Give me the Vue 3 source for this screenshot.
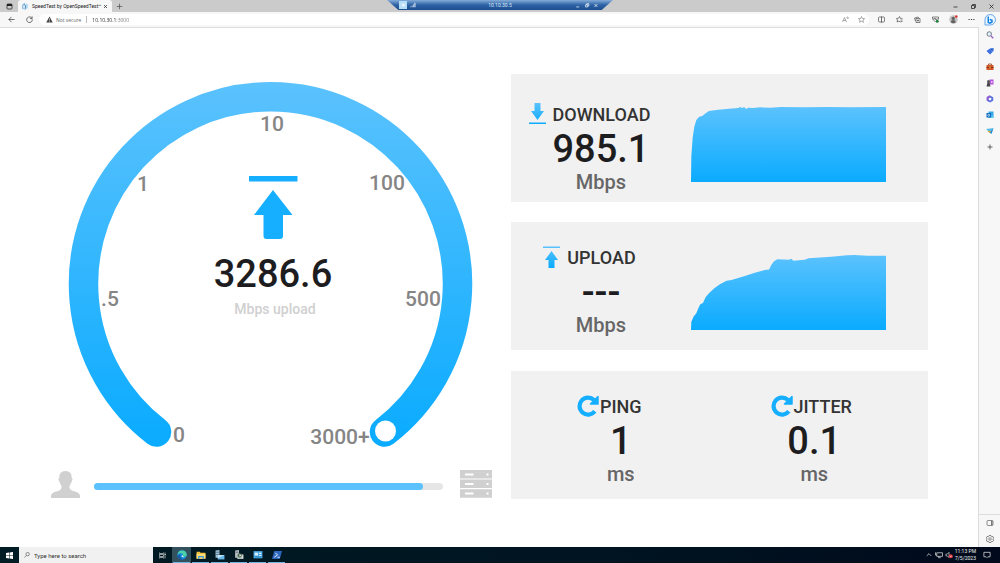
<script setup>
import { ref } from 'vue'

const address = ref('10.10.30.1:3000')
const search = ref('')
const progress = ref(94.3)

const ticks = [
  { label: '0', x: 128, y: 368 },
  { label: '.5', x: 59, y: 232 },
  { label: '1', x: 92, y: 117 },
  { label: '10', x: 221, y: 57 },
  { label: '100', x: 336, y: 116 },
  { label: '500', x: 372, y: 232 },
  { label: '3000+', x: 289, y: 370 }
]

const downloadArea =
  'M0 224L1 146L5 92L10 59L16 39L25 29L34 27L42 20L54 12L82 8L114 5L142 3L148 0L154 3L160 0L166 6L172 2L188 3L208 1L240 2L270 0L340 1L410 0L480 1L587 0V224Z'
const uploadArea =
  'M0 224L1 199L8 184L16 174L22 159L28 147L36 143L44 126L54 114L70 99L87 87L107 77L122 75L162 63L192 53L222 45L235 43L242 29L250 19L260 13L295 14L302 11L308 17L342 14L354 10L422 5L470 1L492 0L532 2L587 2V224Z'

const metrics = [
  { name: 'PING', value: '1' },
  { name: 'JITTER', value: '0.1' }
]
</script>

<template>
  <div class="desktop">
    <header class="tabstrip">
      <button class="tool" aria-label="Tab actions">
        <svg class="glyph" viewBox="0 0 14 14"><rect x="2" y="2" width="10" height="10" rx="1.5" fill="none" stroke="#222" stroke-width="1.5" /><path d="M2 2h10v4H2z" fill="#222" /></svg>
      </button>
      <div class="tab">
        <svg class="glyph" viewBox="0 0 14 14"><path d="M3 12A6 6 0 0 1 6 1.500" fill="none" stroke="#8abbe4" stroke-width="3" /><path d="M7 1c4 0 6 3 5 7l-2 5-3-3z" fill="#b9d7ee" /><path d="M5 3l2 3-1 7" fill="none" stroke="#3486c4" stroke-width="2" /></svg>
        <span class="tab-title">SpeedTest by OpenSpeedTest™</span>
        <button class="close" aria-label="Close tab">
          <svg viewBox="0 0 10 10"><path d="M2 2l6 6M8 2L2 8" stroke="#333" stroke-width="1.500" /></svg>
        </button>
      </div>
      <button class="tool new-tab" aria-label="New tab">
        <svg class="glyph" viewBox="0 0 14 14"><path d="M7 1.500v11M1.500 7h11" stroke="#555" stroke-width="1.500" /></svg>
      </button>
      <div class="window-controls">
        <button class="tool" aria-label="Minimize"><svg class="glyph" viewBox="0 0 14 14"><path d="M3 8h8" stroke="#222" stroke-width="1.500" /></svg></button>
        <button class="tool" aria-label="Restore"><svg class="glyph" viewBox="0 0 14 14"><path d="M3 5h6v6H3zM5 5V3h6v6H9" fill="none" stroke="#222" stroke-width="1.500" /></svg></button>
        <button class="tool" aria-label="Close"><svg class="glyph" viewBox="0 0 14 14"><path d="M3 3l8 8M11 3l-8 8" stroke="#222" stroke-width="1.500" /></svg></button>
      </div>
    </header>

    <div class="remote-bar">
      <span class="remote-pin"><svg viewBox="0 0 14 14"><path d="M2 7h5M7 3v8M7 5h4v4H7" stroke="#fff" stroke-width="1.500" fill="none" /></svg></span>
      <svg class="remote-signal" viewBox="0 0 14 14"><path d="M1 12v-2h2v2zM4 12V8h2v4zM7 12V5h2v7zM10 12V2h3v10z" fill="#c3d4ea" /></svg>
      <span class="remote-host">10.10.30.5</span>
      <svg class="remote-buttons" viewBox="0 0 66 14"><path d="M3 11h8" stroke="#fff" stroke-width="2" /><path d="M29 5h6v6h-6zM32 5V2h6v6h-3M54 3l8 8M62 3l-8 8" stroke="#fff" stroke-width="2" fill="none" /></svg>
    </div>

    <nav class="toolbar" aria-label="Browser">
      <button class="tool" aria-label="Back"><svg class="glyph" viewBox="0 0 16 16"><path d="M15 8H2M8 2L2 8l6 6" fill="none" stroke="#444" stroke-width="1.700" /></svg></button>
      <button class="tool" aria-label="Reload"><svg class="glyph" viewBox="0 0 16 16"><path d="M13.500 5A6.500 6.500 0 1 0 14.500 8M14 1v5H9" fill="none" stroke="#444" stroke-width="1.700" /></svg></button>
      <div class="omnibox">
        <button class="security" type="button">
          <svg class="glyph" viewBox="0 0 14 14"><path d="M7 1l6.500 12H.500z" fill="#444" /><path d="M7 5v4M7 10v1.500" stroke="#fff" stroke-width="1.200" /></svg>
          <span>Not secure</span>
        </button>
        <input v-model="address" class="address" aria-label="Address" />
        <button class="tool" aria-label="Read aloud"><svg class="glyph" viewBox="0 0 14 14"><path d="M1 12L5 3l4 9M2.500 9h5M9 2a5 5 0 0 1 2 4M11 1a7 7 0 0 1 2 4" fill="none" stroke="#666" stroke-width="1.100" /></svg></button>
        <button class="tool" aria-label="Favorite"><svg class="glyph" viewBox="0 0 14 14"><path d="M7 1l1.800 4 4.400.400-3.300 2.900 1 4.300L7 10.300l-3.900 2.300 1-4.300L.800 5.400 5.200 5z" fill="none" stroke="#666" stroke-width="1.100" /></svg></button>
      </div>
      <div class="actions">
        <button class="tool" aria-label="Split screen"><svg class="glyph" viewBox="0 0 14 14"><rect x="1" y="2" width="12" height="10" rx="2" fill="none" stroke="#444" stroke-width="1.300" /><path d="M7 1v12" stroke="#444" stroke-width="1.500" /></svg></button>
        <button class="tool" aria-label="Favorites"><svg class="glyph" viewBox="0 0 14 14"><path d="M9 12.500L6 10l-4 2 1-4L1 5l4-.500L7 1l1.500 3.500L13 5M9 8h4M9 11h4" fill="none" stroke="#444" stroke-width="1.300" /></svg></button>
        <button class="tool" aria-label="Collections"><svg class="glyph" viewBox="0 0 14 14"><path d="M3 10L1 4l7-2 2 2M4 5h8v8H4zM8 7v4M6 9h4" fill="none" stroke="#444" stroke-width="1.300" /></svg></button>
        <button class="tool" aria-label="Browser essentials"><svg class="glyph" viewBox="0 0 14 14"><path d="M7 12L1 6V2h12v5M2 6h3l1-2 2 4 1-2h3" fill="none" stroke="#444" stroke-width="1.300" /><circle cx="10.500" cy="10.500" r="3" fill="#238344" /></svg></button>
        <button class="tool" aria-label="Profile"><svg class="glyph avatar" viewBox="0 0 16 16"><circle cx="8" cy="8" r="7.500" fill="#c4c4c4" /><circle cx="7.500" cy="6" r="3" fill="#626262" /><path d="M3 13q0-4 4.500-4t4.500 4q-4 3-9 0z" fill="#626262" /><circle cx="13" cy="2.500" r="2.200" fill="#e3262b" /></svg></button>
        <button class="tool" aria-label="Settings and more"><svg class="glyph" viewBox="0 0 14 14"><path d="M1 7h2.500M5.800 7h2.500M10.500 7H13" stroke="#444" stroke-width="2" /></svg></button>
      </div>
      <button class="bing" aria-label="Bing Chat">
        <svg viewBox="0 0 24 24"><path d="M2 22V12a10.500 10.500 0 1 1 10 10z" fill="#edf7ff" stroke="#3c8ce7" stroke-width="1.500" /><path d="M8.500 5v12l3.500 1.500 4-2.500v-3.500L11.500 11" fill="none" stroke="#1683e0" stroke-width="3" /></svg>
      </button>
    </nav>

    <div class="viewport">
      <main class="page">
        <section class="meter" aria-label="Speed gauge">
          <svg class="gauge" viewBox="0 0 441 386" role="img" aria-label="3286.6 Mbps upload">
            <defs>
              <linearGradient id="arc" gradientUnits="userSpaceOnUse" x1="0" y1="8" x2="0" y2="373">
                <stop offset="0" stop-color="#5bc2fd" />
                <stop offset="1" stop-color="#0aabff" />
              </linearGradient>
            </defs>
            <path d="M105.500 358A187 187 0 1 1 333.500 358" fill="none" stroke="url(#arc)" stroke-width="29.500" stroke-linecap="round" />
            <circle cx="334.500" cy="357" r="10.500" fill="#fff" />
            <path d="M198 102h48.500v5.500H198zM222 116l19.500 25H232v21q0 3-3 3h-13.500q-3 0-3-3v-21h-9.500z" fill="#16aeff" />
            <text v-for="tick in ticks" :key="tick.label" class="tick" :x="tick.x" :y="tick.y">{{ tick.label }}</text>
            <text class="reading" x="222" y="213">3286.6</text>
            <text class="caption" x="224" y="240">Mbps upload</text>
          </svg>
          <div class="transfer">
            <svg class="person" viewBox="0 0 29 27"><path d="M14.500 0C10 0 8 3 8.300 7q-1.600 1 0 3.500 1 3 2.200 4.500v2q-1 2.500-5.500 3.500Q0 22 0 25v2h29v-2q0-3-5-4.500-4.500-1-5.500-3.500v-2q1.200-1.500 2.200-4.500 1.600-2.500 0-3.500C21 3 19 0 14.500 0z" fill="#d0d0d0" /></svg>
            <div class="track" role="progressbar" aria-label="Test progress" :aria-valuenow="progress">
              <div class="fill" :style="{ width: progress + '%' }"></div>
            </div>
            <svg class="server" viewBox="0 0 32 28"><path d="M0 0h32v8.500H0zM0 9.500h32V18H0zM0 19.200h32v8.500H0z" fill="#d0d0d0" /><path d="M5 3.500h8.500v2H5zM5 13h8.500v2H5zM5 22.500h8.500v2H5zM26.500 3.500h2v2h-2zM26.500 13h2v2h-2zM26.500 22.500h2v2h-2z" fill="#fff" /></svg>
          </div>
        </section>

        <section class="results" aria-label="Results">
          <article class="card download">
            <div class="summary">
              <h2>
                <svg class="arrow" viewBox="0 0 17 22"><path d="M5.500 0h6v8H15l-6.500 9L2 8h3.500zM0 19.500h17V21H0z" fill="url(#area)" /></svg>
                DOWNLOAD
              </h2>
              <p class="value">985.1</p>
              <p class="unit">Mbps</p>
            </div>
            <svg class="chart" viewBox="0 0 587 224" preserveAspectRatio="none" aria-label="Download speed over time">
              <defs>
                <linearGradient id="area" x1="0" y1="0" x2="0" y2="1">
                  <stop offset="0" stop-color="#5bc2fd" />
                  <stop offset="1" stop-color="#0aabff" />
                </linearGradient>
              </defs>
              <path :d="downloadArea" fill="url(#area)" />
            </svg>
          </article>
          <article class="card upload">
            <div class="summary">
              <h2>
                <svg class="arrow" viewBox="0 0 17 22"><path d="M0 .500h17V2H0zM8.500 5l6.500 9h-3.500v8h-6v-8H2z" fill="url(#area)" /></svg>
                UPLOAD
              </h2>
              <p class="value">---</p>
              <p class="unit">Mbps</p>
            </div>
            <svg class="chart" viewBox="0 0 587 224" preserveAspectRatio="none" aria-label="Upload speed over time">
              <path :d="uploadArea" fill="url(#area)" />
            </svg>
          </article>
          <article class="card latency">
            <div v-for="metric in metrics" :key="metric.name" class="metric">
              <h2>
                <svg class="refresh" viewBox="0 0 22 22"><path d="M17.800 16.300A8.500 8.500 0 1 1 17 5" fill="none" stroke="#16aeff" stroke-width="4.200" /><path d="M21 1.500V9h-7.500z" fill="#16aeff" stroke="#16aeff" stroke-width="1.500" stroke-linejoin="round" /></svg>
                {{ metric.name }}
              </h2>
              <p class="value">{{ metric.value }}</p>
              <p class="unit">ms</p>
            </div>
          </article>
        </section>
      </main>

      <aside class="sidebar" aria-label="Edge sidebar">
        <button class="side" aria-label="Search"><svg viewBox="0 0 16 16"><circle cx="6.500" cy="6" r="4.500" fill="#e4f3fb" stroke="#66717d" stroke-width="1.800" /><path d="M10 10l4.500 4.500" stroke="#9b57c9" stroke-width="2.500" /></svg></button>
        <button class="side" aria-label="Shopping"><svg viewBox="0 0 16 16"><path d="M1 8l7-5 7-1v6l-7 7z" fill="#3c6fe0" /><path d="M8 3l7-1v6l-3 2z" fill="#5d91f3" /><circle cx="12" cy="5" r="1.500" fill="#203b7a" /></svg></button>
        <button class="side" aria-label="Tools"><svg viewBox="0 0 16 16"><path d="M5 4V2h6v2" fill="none" stroke="#8b3519" stroke-width="1.500" /><path d="M1 4h14v10H1z" fill="#d25522" /><path d="M1 8h14v2H1z" fill="#8b2f15" /><path d="M7 7h2v4H7z" fill="#f5c25c" /></svg></button>
        <button class="side" aria-label="Games"><svg viewBox="0 0 16 16"><path d="M7 1h8v10H7z" fill="#b352db" /><path d="M10 4h3v4h-3z" fill="#e7b7fa" /><circle cx="5" cy="5" r="3" fill="#555" /><path d="M3 7h4l2 8H1z" fill="#444" /></svg></button>
        <button class="side" aria-label="Microsoft 365"><svg viewBox="0 0 16 16"><path d="M8 3l4.500 2.500v5L8 13l-4.500-2.500v-5z" fill="none" stroke="#5b71df" stroke-width="4" stroke-linejoin="round" /><path d="M3 11V5l5-3" fill="none" stroke="#975bd2" stroke-width="3" /></svg></button>
        <button class="side" aria-label="Outlook"><svg viewBox="0 0 16 16"><path d="M5 1h10v13H5z" fill="#31a9e8" /><path d="M5 9l5 3 5-4v6H5z" fill="#65cdf4" /><path d="M1 4h9v9H1z" fill="#0a68bd" /><circle cx="5.500" cy="8.500" r="2" fill="none" stroke="#fff" stroke-width="1.300" /></svg></button>
        <button class="side" aria-label="Drop"><svg viewBox="0 0 16 16"><path d="M1 4l14-1-4 11-4-3z" fill="#268bd2" /><path d="M1 4l14-1-8 8z" fill="#56bceb" /><path d="M7 12l3-4-7 0z" fill="#e6ae28" /></svg></button>
        <button class="side" aria-label="Add"><svg viewBox="0 0 16 16"><path d="M8 3v10M3 8h10" stroke="#444" stroke-width="1.600" /></svg></button>
        <div class="side-end">
          <button class="side" aria-label="Toggle sidebar"><svg viewBox="0 0 16 16"><rect x="2" y="3" width="12" height="10" rx="2" fill="none" stroke="#555" stroke-width="1.300" /><path d="M10 3v10h3V3z" fill="#777" /></svg></button>
          <button class="side" aria-label="Settings"><svg viewBox="0 0 16 16"><path d="M6 1h4l1 2.500 3-.500 1.500 3.500L13.500 8l2 2-2 3-2.500-.500L10 15H6l-1-2.500L2 13 .500 10l2-2L.500 6 2 3l3 .500z" fill="none" stroke="#555" stroke-width="1.300" /><circle cx="8" cy="8" r="2.500" fill="none" stroke="#555" stroke-width="1.300" /></svg></button>
        </div>
      </aside>
    </div>

    <footer class="taskbar">
      <button class="start" aria-label="Start"><svg viewBox="0 0 14 14"><path d="M0 2l6-1v5.500H0zM7 1l7-1v6.500H7zM0 7.500h6V13l-6-1zM7 7.500h7V14l-7-1z" fill="#fff" /></svg></button>
      <label class="search">
        <svg viewBox="0 0 14 14"><circle cx="8.500" cy="5" r="4" fill="none" stroke="#333" stroke-width="1.200" /><path d="M5.500 8L1 13" stroke="#333" stroke-width="1.200" /></svg>
        <input v-model="search" placeholder="Type here to search" aria-label="Type here to search" />
      </label>
      <button class="app idle" aria-label="Task View"><svg viewBox="0 0 18 18"><path d="M3 3v2h8V3M3 15v-2h8v2M3 7h8v4H3zM14 3v12M13 7h3" fill="none" stroke="#ddd" stroke-width="1.300" /></svg></button>
      <button class="app active" aria-label="Microsoft Edge"><svg viewBox="0 0 18 18"><circle cx="9" cy="9" r="8.500" fill="#1687d9" /><path d="M1 8a8.300 8.300 0 0 1 16.500 1q-.500 4-5.500 3-3-1-1-3-1-4-5-3-3 0-5 2z" fill="#4bd1a5" /><path d="M6 8q-2 7 6 8.500-6 2-10-3Q1 8 6 8z" fill="#1456a5" /><path d="M10 9q-1 3 3 3.500-3 2-5-1.500z" fill="#fff" /></svg></button>
      <button class="app" aria-label="File Explorer"><svg viewBox="0 0 18 18"><path d="M1 3h6l1 2h9v10H1z" fill="#f5bf3b" /><path d="M1 7h16v9H1z" fill="#fddb75" /><path d="M4 16v-5h10v5h-2v-3H6v3z" fill="#3895d9" /></svg></button>
      <button class="app" aria-label="Server Manager"><svg viewBox="0 0 18 18"><path d="M1 1l7-1v14H1z" fill="#a2c1d6" /><path d="M2 3h5v2H2zM2 7h5v2H2z" fill="#567991" /><path d="M5 9h12v8H5z" fill="#66b8e9" /><path d="M5 9h12l-12 6z" fill="#c2e4f6" /></svg></button>
      <button class="app" aria-label="Server console"><svg viewBox="0 0 18 18"><path d="M2 1l7-1v14H2z" fill="#b6bec2" /><path d="M3 3h5v2H3z" fill="#66747b" /><rect x="6" y="8" width="11" height="8" fill="#d1d4d3" /><circle cx="10" cy="10" r="4" fill="#53725b" /><path d="M10 7l3 3-3 2z" fill="#e4eee7" /></svg></button>
      <button class="app" aria-label="Control Panel"><svg viewBox="0 0 18 18"><path d="M1 2h16v13H1z" fill="#4ba9e7" /><path d="M3 5h6v5H3zM11 5h4v2h-4zM11 9h4v2h-4z" fill="#d8f0fc" /><path d="M3 12h12v1H3z" fill="#146799" /></svg></button>
      <button class="app" aria-label="PowerShell"><svg viewBox="0 0 18 18"><path d="M4 2h14l-4 14H0z" fill="#2b67bd" /><path d="M6 5l4 4-6 4M10 13h4" fill="none" stroke="#fff" stroke-width="1.600" /></svg></button>
      <div class="tray">
        <svg viewBox="0 0 18 18"><path d="M4 11l5-5 5 5" fill="none" stroke="#ddd" stroke-width="1.700" /></svg>
        <svg viewBox="0 0 18 18"><path d="M4 4h13v8H4zM8 12v3h5M1 3v6h3" fill="none" stroke="#ddd" stroke-width="1.700" /></svg>
        <svg viewBox="0 0 18 18"><path d="M2 7h3l4-4v12l-4-4H2z" fill="none" stroke="#ddd" stroke-width="1.500" /><circle cx="13" cy="12" r="4.500" fill="#d92d35" /><path d="M11 10l4 4M15 10l-4 4" stroke="#fff" stroke-width="1.200" /></svg>
        <time class="clock">11:13 PM<br />7/5/2023</time>
        <svg class="notice" viewBox="0 0 18 18"><path d="M2 3h14v10h-5l-2 2-2-2H2z" fill="none" stroke="#ddd" stroke-width="1.700" /></svg>
      </div>
    </footer>
  </div>
</template>

<style>
body {
  margin: 0;
  background: #fff;
}
</style>

<style scoped>
.desktop {
  position: relative;
  display: flex;
  flex-direction: column;
  min-height: 100vh;
  font-family: "Open Sans", "Noto Sans", sans-serif;
  font-size: 5px;
  color: #333;
}
.desktop *,
.desktop {
  box-sizing: border-box;
}
svg {
  display: block;
  flex: none;
}
button {
  display: flex;
  align-items: center;
  justify-content: center;
  flex: none;
  padding: 0;
  border: 0;
  background: none;
  color: inherit;
  font: inherit;
}
input {
  min-width: 0;
  padding: 0;
  border: 0;
  outline: 0;
  background: none;
  font: inherit;
}
.tool {
  width: 18px;
  height: 12px;
}
.glyph {
  width: 7px;
  height: 7px;
}
.glyph.avatar {
  width: 9px;
  height: 9px;
}

.tabstrip,
.remote-bar,
.taskbar {
  font-family: Roboto, sans-serif;
}
.tabstrip {
  display: flex;
  height: 12px;
  background: #cbcbcb;
}
.tab {
  display: flex;
  align-items: center;
  width: 94px;
  padding: 0 4px;
  border-radius: 3px 3px 0 0;
  background: #f7f7f7;
}
.tab-title {
  flex: 1;
  margin-left: 3px;
  color: #222;
  white-space: nowrap;
}
.close,
.close svg {
  width: 5px;
  height: 5px;
}
.new-tab {
  width: 14px;
}
.window-controls {
  display: flex;
  margin-left: auto;
}

.remote-bar {
  position: absolute;
  top: 0;
  left: 50%;
  display: flex;
  align-items: center;
  width: 226px;
  height: 10px;
  padding: 0 14px 0 12px;
  transform: translateX(-50%);
  clip-path: polygon(0 0, 100% 0, 95% 100%, 5% 100%);
  background: linear-gradient(#85acd8, #2c62a5 50%, #1e4e8f);
  color: #dce8f8;
}
.remote-pin {
  padding: 1px;
  background: #b6dcf7;
}
.remote-pin svg,
.remote-signal {
  width: 6px;
  height: 6px;
}
.remote-signal {
  margin-left: 3px;
}
.remote-host {
  flex: 1;
  padding-left: 9px;
  text-align: center;
}
.remote-buttons {
  width: 24px;
  height: 5px;
}

.toolbar {
  display: flex;
  align-items: center;
  height: 15px;
  padding-left: 2px;
  background: #f7f7f7;
}
.omnibox {
  display: flex;
  flex: 1;
  align-items: center;
  height: 11px;
  margin-left: 1px;
  border-radius: 6px;
  background: #fff;
}
.omnibox .tool {
  width: 16px;
}
.security {
  gap: 3px;
  margin-left: 7px;
  padding-right: 5px;
  border-right: 1px solid #bbb;
  color: #666;
  line-height: 6px;
}
.address {
  flex: 1;
  height: 9px;
  margin-left: 5px;
  background: linear-gradient(90deg, #222 24px, #777 24px);
  background-clip: text;
  color: transparent;
}
.actions {
  display: flex;
  margin-left: 3px;
}
.bing {
  width: 20px;
  height: 15px;
}
.bing svg {
  width: 12px;
  height: 12px;
}

.viewport {
  display: flex;
  flex: 1;
}
.page {
  display: grid;
  flex: 1;
  grid-template-columns: 441fr 417fr;
  gap: 19px;
  align-items: start;
  padding: 46px 50px 47px 51px;
  border-top: 1px solid #ddd;
  border-right: 1px solid #ddd;
  background: #fff;
  font-family: Roboto, sans-serif;
  font-weight: 500;
}
.gauge {
  width: 100%;
}
.gauge text {
  text-anchor: middle;
}
.tick {
  font-size: 21px;
  fill: #858585;
}
.reading {
  font-size: 38px;
  fill: #1d1d1f;
}
.caption {
  font-size: 14px;
  fill: #d0d0d0;
}
.transfer {
  display: flex;
  align-items: center;
  margin-top: 10px;
}
.person {
  width: 29px;
  height: 27px;
}
.track {
  flex: 1;
  height: 7px;
  margin: 4px 17px 0 14px;
  border-radius: 4px;
  background: #e6e6e6;
}
.fill {
  height: 100%;
  border-radius: 4px;
  background: #5bc2fd;
}
.server {
  width: 32px;
  height: 28px;
}

.results {
  display: grid;
  gap: 20px;
}
.card {
  display: grid;
  grid-template-columns: 180fr 195fr;
  height: 128px;
  padding: 23px 42px 0 0;
  background: #f1f1f1;
}
.card.download {
  padding-top: 28px;
}
.card h2 {
  display: flex;
  align-items: center;
  justify-content: center;
  gap: 7px;
  height: 24px;
  margin: 0;
  padding-right: 23px;
  color: #333;
  font-size: 18px;
  font-weight: 500;
}
.value,
.unit {
  margin: 0;
  text-align: center;
}
.value {
  padding-top: 1px;
  color: #1d1d1f;
  font-size: 38px;
  line-height: 44px;
}
.unit {
  color: #666;
  font-size: 20px;
  line-height: 22px;
}
.arrow {
  width: 17px;
  height: 22px;
}
.chart {
  width: 100%;
  height: 75px;
  margin-top: 10px;
}
.download .chart {
  margin-top: 5px;
}
.card.latency {
  grid-template-columns: 1fr 1fr;
  margin-top: 1px;
  padding: 23px 17px 0 13px;
}
.latency h2 {
  justify-content: flex-start;
  gap: 1px;
  padding: 0 0 0 53px;
}
.refresh {
  width: 22px;
  height: 22px;
}

.sidebar {
  display: flex;
  flex-direction: column;
  align-items: center;
  width: 21px;
  background: #f7f7f7;
}
.side {
  width: 21px;
  height: 16px;
}
.side svg {
  width: 8px;
  height: 8px;
}
.side-end {
  margin-top: auto;
  border-top: 1px solid #ddd;
}

.taskbar {
  display: flex;
  height: 16px;
  background: linear-gradient(90deg, #001c24, #001421 60%, #000a1c);
}
.start {
  width: 19px;
}
.start svg {
  width: 7px;
  height: 7px;
}
.search {
  display: flex;
  align-items: center;
  gap: 4px;
  width: 134px;
  padding-left: 5px;
  background: #f1f1f1;
}
.search svg {
  width: 6px;
  height: 6px;
}
.search input {
  flex: 1;
  height: 14px;
  font-size: 6px;
}
.search input::placeholder {
  color: #333;
}
.app {
  width: 19px;
  border: solid transparent;
  border-width: 0 1px;
  background: linear-gradient(#70b6e5, #70b6e5) bottom / 100% 1px no-repeat;
}
.app svg {
  width: 10px;
  height: 10px;
}
.app.idle {
  background: none;
}
.app.idle svg {
  width: 9px;
  height: 9px;
}
.app.active {
  background-color: #33505d;
}
.tray {
  display: flex;
  align-items: center;
  gap: 2px;
  margin-left: auto;
  padding-right: 9px;
  color: #eee;
}
.tray svg {
  width: 8px;
  height: 8px;
}
.clock {
  line-height: 7px;
  text-align: right;
}
.tray .notice {
  margin-left: 5px;
}
</style>
